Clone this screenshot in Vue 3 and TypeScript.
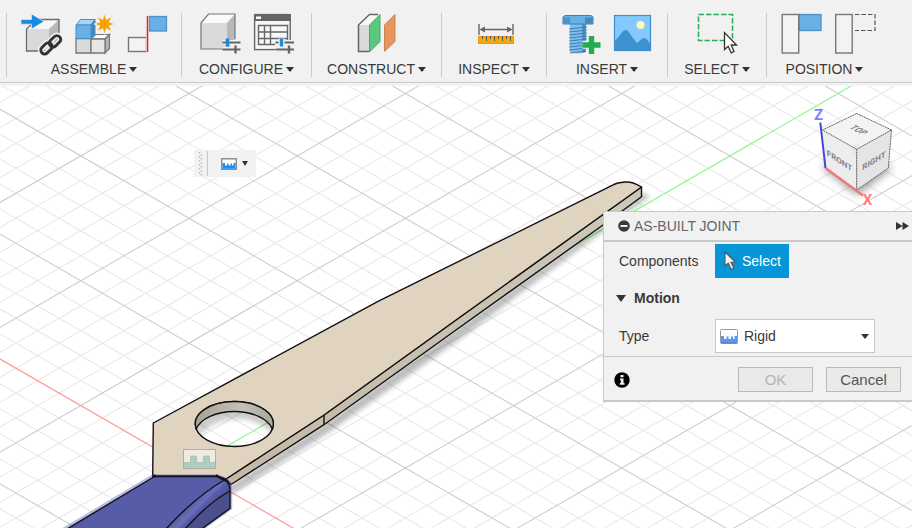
<script setup lang="ts">
import { ref } from 'vue'

interface Line { x1: number; y1: number; x2: number; y2: number; major: boolean }

// Ground grid: two families of lines crossing at the origin, every fifth one is major.
const origin = { x: 189, y: 468 }
const step = 24.97
const slope = 0.577
const span = 1400

function buildGrid(): Line[] {
  const lines: Line[] = []
  for (let i = -45; i <= 45; i++) {
    for (const dir of [1, -1]) {
      if (i === 0) continue
      const y = origin.y + i * step
      lines.push({
        x1: origin.x - span,
        y1: y - dir * slope * span,
        x2: origin.x + span,
        y2: y + dir * slope * span,
        major: i % 5 === 0,
      })
    }
  }
  return lines
}

const grid = buildGrid()
const minorLines = grid.filter((l) => !l.major)
const majorLines = grid.filter((l) => l.major)

function star(cx: number, cy: number, outer: number, inner: number): string {
  const pts: string[] = []
  for (let i = 0; i < 16; i++) {
    const r = i % 2 === 0 ? outer : inner
    const a = (Math.PI / 8) * i - Math.PI / 2
    pts.push(`${(cx + r * Math.cos(a)).toFixed(2)},${(cy + r * Math.sin(a)).toFixed(2)}`)
  }
  return pts.join(' ')
}

const sparkle = star(30.5, 11, 10.5, 5)
const jointType = ref('Rigid')
const motionOpen = ref(true)
</script>

<template>
  <div class="app">
    <header class="toolbar">
      <section class="group">
        <div class="tools">
          <button class="tool" aria-label="Insert component">
            <svg viewBox="0 0 42 42">
              <path d="M5.500 16 16 6.500H38L28 16Z" fill="#f7f7f7" />
              <path d="M28 16 38 6.500V29L28 38Z" fill="#b9b9b9" />
              <path d="M5.500 16H28V38H5.500Z" fill="#dadada" />
              <path d="M28 38H5.500V16L16 6.500H38V29L28 38" fill="none" stroke="#6b6b6b" stroke-width="1.300" />
              <path d="M0 6.500H10.500V1L23 8.500 10.500 16V11.200H0Z" fill="#1b8be0" stroke="#f1f1f1" stroke-width=".6" />
              <g fill="none" stroke="#f1f1f1" stroke-width="6">
                <rect x="19" y="31.500" width="13" height="7.600" rx="3.800" transform="rotate(-45 25.500 35.300)" />
                <rect x="27.500" y="24.500" width="13" height="7.600" rx="3.800" transform="rotate(-45 34 28.300)" />
              </g>
              <g fill="none" stroke="#333" stroke-width="2.900">
                <rect x="19" y="31.500" width="13" height="7.600" rx="3.800" transform="rotate(-45 25.500 35.300)" />
                <rect x="27.500" y="24.500" width="13" height="7.600" rx="3.800" transform="rotate(-45 34 28.300)" />
              </g>
            </svg>
          </button>
          <button class="tool" aria-label="New component">
            <svg viewBox="0 0 42 42">
              <path d="M2 25.500H17V40H2Z" fill="#dadada" stroke="#777" stroke-width="1.300" />
              <path d="M17 26 21.500 21.500H35.500L31 26Z" fill="#fafafa" stroke="#777" stroke-width="1.200" />
              <path d="M31 26 35.500 21.500V35.500L31 40Z" fill="#b5b5b5" stroke="#777" stroke-width="1.200" />
              <path d="M17 26H31V40H17Z" fill="#e6e6e6" stroke="#777" stroke-width="1.300" />
              <path d="M2 12 6.500 6.500H21L17 12Z" fill="#a9d5f5" stroke="#4690c8" />
              <path d="M17 12 21 6.500V21L17 25.500Z" fill="#3f86bd" stroke="#4690c8" />
              <path d="M2 12H17V25.500H2Z" fill="#69b0e6" stroke="#4690c8" />
              <polygon :points="sparkle" fill="#f8a000" stroke="#f1f1f1" stroke-width=".8" />
            </svg>
          </button>
          <button class="tool" aria-label="Joint">
            <svg viewBox="0 0 42 42">
              <rect x="1.500" y="24.500" width="18" height="14" fill="#f3f3f3" stroke="#777" stroke-width="1.400" />
              <rect x="22.500" y="3.500" width="17" height="14.500" fill="#69b0e6" stroke="#4c93c9" stroke-width="1.300" />
              <path d="M20.500 3V39" stroke="#f1f1f1" stroke-width="3" />
              <path d="M20.500 3V39" stroke="#d8232a" stroke-width="1.500" />
            </svg>
          </button>
        </div>
        <button class="menu">ASSEMBLE<i class="caret"></i></button>
      </section>

      <section class="group">
        <div class="tools">
          <button class="tool" aria-label="Configure model">
            <svg viewBox="0 0 42 42">
              <path d="M1 10 8.500 1H35L27 10Z" fill="#f9f9f9" />
              <path d="M1 10H27V36H1Z" fill="#dadada" />
              <path d="M27 10 35 1V27L27 36Z" fill="#b8b8b8" />
              <path d="M23 36H1V10L8.500 1H35V26" fill="none" stroke="#777" stroke-width="1.200" />
              <path d="M22.500 29.500H40.500M22.500 36.500H40.500" stroke="#f1f1f1" stroke-width="5" />
              <path d="M22.500 29.500H40.500M22.500 36.500H40.500" stroke="#666" stroke-width="2.200" />
              <path d="M27.500 25.500V33.500" stroke="#1b8be0" stroke-width="3.600" />
              <path d="M35.500 32.500V40.500" stroke="#666" stroke-width="2.400" />
            </svg>
          </button>
          <button class="tool" aria-label="Configuration table">
            <svg viewBox="0 0 42 42">
              <rect x="1.600" y="1.600" width="35.600" height="35" fill="#f7f7f7" stroke="#666" stroke-width="1.400" />
              <path d="M1 1H38V8H1Z" fill="#666" />
              <path d="M3 3.500H8V6H3Z" fill="#fff" />
              <path d="M5.500 12.500H34.500V31.500H5.500ZM5.500 19H34.500M5.500 25.500H34.500M11.500 12.500V31.500M17.500 12.500V31.500" fill="none" stroke="#666" stroke-width="1.400" />
              <path d="M22 27H41V41H22Z" fill="#f1f1f1" />
              <path d="M22.500 29.500H41M22.500 36.500H41" stroke="#666" stroke-width="2.200" />
              <path d="M28.500 25.500V33.500" stroke="#f1f1f1" stroke-width="6" />
              <path d="M28.500 25.500V33.500" stroke="#1b8be0" stroke-width="3.400" />
              <path d="M36 32.500V40.500" stroke="#666" stroke-width="2.400" />
            </svg>
          </button>
        </div>
        <button class="menu">CONFIGURE<i class="caret"></i></button>
      </section>

      <section class="group">
        <div class="tools">
          <button class="tool" aria-label="Offset plane">
            <svg viewBox="-1 0 42 42">
              <path d="M1.500 12 12.500 1.500H23L12 12Z" fill="#fafafa" />
              <path d="M1.500 12H12V38.500H1.500Z" fill="#dadada" />
              <path d="M12 38.500H1.500V12L12.500 1.500H21" fill="none" stroke="#666" stroke-width="1.500" />
              <path d="M12.500 12 23 1.500V28.500L12.500 39Z" fill="#5bc77c" stroke="#43ad65" />
              <path d="M27.500 12 38 1.500V28.500L27.500 38.500Z" fill="#e6955f" stroke="#cf8250" />
            </svg>
          </button>
        </div>
        <button class="menu">CONSTRUCT<i class="caret"></i></button>
      </section>

      <section class="group">
        <div class="tools">
          <button class="tool" aria-label="Measure">
            <svg viewBox="-3 0 42 42">
              <path d="M2 11V22M36 11V22M4 16.500H34" stroke="#666" stroke-width="1.400" />
              <path d="M2.500 16.500 8 13.500V19.500ZM35.500 16.500 30 13.500V19.500Z" fill="#666" />
              <rect x="1.500" y="23.500" width="35" height="7" fill="#fba905" stroke="#e89a10" />
              <path d="M5.500 23V26M9.500 23V28M13.500 23V26M17.500 23V28M21.500 23V26M25.500 23V28M29.500 23V26M33.500 23V28" stroke="#555" stroke-width="1" />
            </svg>
          </button>
        </div>
        <button class="menu">INSPECT<i class="caret"></i></button>
      </section>

      <section class="group">
        <div class="tools">
          <button class="tool" aria-label="Insert fastener">
            <svg viewBox="-2 0 42 42">
              <path d="M8 11H24V39Q16 42 8 39Z" fill="#7fbdea" />
              <path d="M20 11H24V39L20 40Z" fill="#4c93c9" />
              <path d="M7 16 25 14M7 19 25 17M7 22 25 20M7 25 25 23M7 28 25 26M7 31 25 29M7 34 25 32M7 37 25 35M8 40 24 38" stroke="#3c80b4" stroke-width="1" />
              <path d="M1 4 3 2.500H29L31 4V11H1Z" fill="#69b0e6" stroke="#3c80b4" />
              <path d="M1.500 4.500H8V10.500H1.500Z" fill="#4c93c9" />
              <path d="M23 4.500H30.500V10.500H23Z" fill="#4388c0" />
              <path d="M29.500 22.500V41M20.500 31.800H39" stroke="#f1f1f1" stroke-width="8" />
              <path d="M29.500 23V41M20.500 32H38.500" stroke="#22ac50" stroke-width="5.400" />
            </svg>
          </button>
          <button class="tool" aria-label="Insert canvas">
            <svg viewBox="0 0 42 42">
              <rect x="1.500" y="2.500" width="36" height="35" fill="#84c9fd" />
              <circle cx="27.500" cy="12" r="4" fill="#fdf8c4" stroke="#e8e2a0" stroke-width=".5" />
              <path d="M1.500 28C6 25 9 17 12.500 17S19 25 24 30C27 28 28.500 25 31 25S35 28 37.500 31V37.500H1.500Z" fill="#3d92cf" />
              <rect x="1.500" y="2.500" width="36" height="35" fill="none" stroke="#3e8fcb" stroke-width="1.200" />
            </svg>
          </button>
        </div>
        <button class="menu">INSERT<i class="caret"></i></button>
      </section>

      <section class="group">
        <div class="tools">
          <button class="tool" aria-label="Select">
            <svg viewBox="0 0 42 42">
              <rect x="1.500" y="1.500" width="34" height="26" fill="none" stroke="#25ae57" stroke-width="1.500" stroke-dasharray="5.500 2" />
              <path d="M27.500 19.500V36.500L31.200 33.200 34.200 39.800 37 38.500 34.200 32H39.500Z" fill="#fff" stroke="#333" stroke-width="1.300" />
            </svg>
          </button>
        </div>
        <button class="menu">SELECT<i class="caret"></i></button>
      </section>

      <section class="group">
        <div class="tools">
          <button class="tool" aria-label="Capture position">
            <svg viewBox="-3 0 42 42">
              <rect x="18" y="1.500" width="22" height="16" fill="#69b0e6" stroke="#4c93c9" stroke-width="1.300" />
              <rect x="1.200" y="1.500" width="16.500" height="38.500" fill="#f3f3f3" stroke="#777" stroke-width="1.400" />
            </svg>
          </button>
          <button class="tool" aria-label="Revert position">
            <svg viewBox="-3 0 42 42">
              <path d="M21 1.500H41V17.500H21" fill="none" stroke="#555" stroke-width="1.200" stroke-dasharray="4.500 2" />
              <rect x="1.700" y="1.500" width="16.500" height="38.500" fill="#f3f3f3" stroke="#777" stroke-width="1.400" />
            </svg>
          </button>
        </div>
        <button class="menu">POSITION<i class="caret"></i></button>
      </section>
    </header>

    <main class="viewport">
      <svg class="scene" viewBox="0 86 912 442" preserveAspectRatio="xMinYMin slice" role="img" aria-label="Model view">
        <defs>
          <linearGradient id="wall" x1="0" x2="1">
            <stop offset="0" stop-color="#aaa296" />
            <stop offset=".6" stop-color="#c2c1b6" />
            <stop offset="1" stop-color="#a8a89e" />
          </linearGradient>
          <linearGradient id="side" x1="0" x2="1">
            <stop offset="0" stop-color="#c6b8a5" />
            <stop offset="1" stop-color="#cbc8bb" />
          </linearGradient>
          <linearGradient id="fillet" gradientUnits="userSpaceOnUse" x1="192" y1="500" x2="206" y2="514">
            <stop offset="0" stop-color="#565ba8" />
            <stop offset=".45" stop-color="#6a6fba" />
            <stop offset=".6" stop-color="#565bad" />
            <stop offset="1" stop-color="#4e5399" />
          </linearGradient>
          <filter id="soft" x="-10%" y="-10%" width="120%" height="120%">
            <feGaussianBlur stdDeviation="2.500" />
          </filter>
          <clipPath id="holeClip"><ellipse cx="234.300" cy="434" rx="39" ry="22.500" /></clipPath>
        </defs>

        <g stroke="#e9e9e9" stroke-width="1.100">
          <line v-for="(l, i) in minorLines" :key="i" :x1="l.x1" :y1="l.y1" :x2="l.x2" :y2="l.y2" />
        </g>
        <g stroke="#cdcdcd" stroke-width="1.100">
          <line v-for="(l, i) in majorLines" :key="i" :x1="l.x1" :y1="l.y1" :x2="l.x2" :y2="l.y2" />
        </g>
        <line x1="-1211" y1="-339.800" x2="1589" y2="1275.800" stroke="#ff9595" stroke-width="1.200" />
        <line x1="189" y1="468" x2="1589" y2="-339.800" stroke="#8cf98c" stroke-width="1.200" />

        <path d="M229 486 324 424 456 329 603 224 642 193 650 196 606 229 460 339 328 433 232 494Z" fill="#000" opacity=".26" filter="url(#soft)" />
        <g clip-path="url(#holeClip)">
          <path d="M190 405H280V440Q258 417 234 419 214 420 198 437Z" fill="#000" opacity=".2" filter="url(#soft)" />
        </g>

        <g stroke="#111" stroke-width="1.400" stroke-linejoin="round">
          <path d="M226 479 324 415 456 320 603 214.500 641.500 187V196.700L603 225 456 330 324 424.700 231 484.500Z" fill="url(#side)" />
          <path d="M324 415V424.700" />
          <path
            d="M153.300 423 378 301.300 612.700 185.200Q617 182.500 625 182T641.500 187L603 214.500 456 320 324 415 226 479 217 476H152.700ZM195.300 424A39 22.500 0 0 0 273.300 424 39 22.500 0 0 0 195.300 424Z"
            fill="#e0d4c0"
            fill-rule="evenodd"
          />
          <path d="M196.300 429A39 22.500 0 1 1 272.300 429 39 22.500 0 0 0 196.300 429Z" fill="url(#wall)" />
        </g>

        <path d="M66 528 153 476H217Q231 480 230.500 489V508L203 528Z" fill="none" stroke="#4a52c4" stroke-width="3.500" opacity=".4" />
        <path d="M67 529 154.500 476.500H217Q230 480 230 489V508.500L201.500 529Z" fill="#575ca8" />
        <path d="M223.500 480.500C205 491 187 506 166 529H185C200 512 214 500 229.500 491Q230 485 223.500 480.500Z" fill="url(#fillet)" />
        <path d="M229.700 491C214 500 200 512 185 529H201.500L230 508.500Z" fill="#4b4f8c" />
        <g fill="none" stroke="#111" stroke-width="1.400" stroke-linejoin="round">
          <path d="M67 529 154.500 476.500H217Q230 480 230 489V508.500L201.500 529" />
          <path d="M226 479C205 491 187 506 166 529" />
          <path d="M229.700 491C214 500 200 512 185 529" />
        </g>
        <path d="M152.500 477.500 155.500 475M216 475 220 478 226 481" stroke="#111" stroke-width="1.800" fill="none" />

        <rect x="183.500" y="449.500" width="32" height="19" fill="#f2ede6" opacity=".85" />
        <path d="M184 462.500H190.500V456H196.500V462.500H203.500V456H209.500V462.500H215.500V468.500H184Z" fill="#abcfc3" stroke="#9cb5a9" stroke-width=".6" />
        <rect x="183.500" y="449.500" width="32" height="19" fill="none" stroke="#b7ac9b" />
      </svg>

      <svg class="cube" viewBox="812 104 90 104" role="img" aria-label="View cube">
        <defs>
          <filter id="cubeShadow" x="-30%" y="-30%" width="160%" height="160%"><feGaussianBlur stdDeviation="4" /></filter>
        </defs>
        <path d="M822 167 857 148 892 168 857 195Z" fill="#000" opacity=".4" filter="url(#cubeShadow)" />
        <path d="M856.700 113.500 891.500 130 856.700 149.300 822.500 130Z" fill="#f3f3f3" />
        <path d="M822.500 130 856.700 149.300V190L825.700 168.300Z" fill="#ededed" />
        <path d="M891.500 130 856.700 149.300V190L888.300 168Z" fill="#e5e5e5" />
        <path d="M852 147 857 143 862 147V152L857 156 852 152Z" fill="#dfe3ea" opacity=".7" />
        <path d="M856.700 113.500 891.500 130 856.700 149.300 822.500 130ZM856.700 149.300V190M891.500 130 888.300 168 856.700 190 825.700 168.300" fill="none" stroke="#666" stroke-dasharray="2 .6" />
        <path d="M820.300 122.500 825.500 168" stroke="#4444dc" stroke-width="2" />
        <path d="M825.500 168 863 195.500" stroke="#f07878" stroke-width="2.200" />
        <g class="face">
          <text transform="translate(855.500 131.500) rotate(26) skewX(-40)">TOP</text>
          <text transform="translate(839.500 163.500) skewY(33)">FRONT</text>
          <text transform="translate(874 163.500) skewY(-31)">RIGHT</text>
        </g>
        <text class="axis" x="818.500" y="120" fill="#8080fa">Z</text>
        <text class="axis" x="867.500" y="205" fill="#ff8080">X</text>
      </svg>

      <div class="mini">
        <svg class="grip" viewBox="0 0 12 27" aria-hidden="true">
          <path d="M1.500 2V26M3.500 4V26" stroke="#bbb" stroke-width="1.500" stroke-dasharray="1.500 2.500" />
          <path d="M9.500 1V26" stroke="#c6c6c6" />
        </svg>
        <button class="mini-button" aria-label="Joint menu">
          <svg width="16" height="12" viewBox="0 0 16 12">
            <rect x=".75" y=".75" width="14.500" height="10.500" fill="#fff" stroke="#8a8f94" stroke-width="1.500" />
            <path d="M1.500 5H4V7.500H6V5.500H7.500V7.500H9.500V5.500H11V7.500H12.500V5H14.500V10.800H1.500Z" fill="#1990f5" />
          </svg>
          <i class="caret small"></i>
        </button>
      </div>

      <form class="panel" @submit.prevent>
        <div class="panel-head">
          <button type="button" class="plain" aria-label="Collapse">
            <svg width="12" height="12" viewBox="0 0 12 12"><circle cx="6" cy="6" r="5.800" fill="#3a3a3a" /><path d="M2.500 6H9.500" stroke="#eee" stroke-width="2" /></svg>
          </button>
          <h2>AS-BUILT JOINT</h2>
          <button type="button" class="plain" aria-label="Expand">
            <svg width="13" height="8" viewBox="0 0 13 8"><path d="M0 0 6.500 4 0 8ZM6.500 0 13 4 6.500 8Z" fill="#333" /></svg>
          </button>
        </div>
        <div class="panel-body">
          <label for="pick">Components</label>
          <button id="pick" type="button" class="pick">
            <svg width="13" height="20" viewBox="0 0 13 20"><path d="M1 1V15L4.300 12.200 7.300 18.500 9.800 17.300 7 11.300H11.500Z" fill="#f4f4f4" stroke="#555" stroke-width="1.100" /></svg>
            Select
          </button>
          <button type="button" class="motion" :aria-expanded="motionOpen" @click="motionOpen = !motionOpen">
            <i class="caret large"></i>Motion
          </button>
          <label v-if="motionOpen" for="type">Type</label>
          <div v-if="motionOpen" class="dropdown">
            <select id="type" v-model="jointType">
              <option>Rigid</option>
              <option>Revolute</option>
              <option>Slider</option>
            </select>
            <svg class="type-icon" width="18" height="15" viewBox="0 0 18 15">
              <rect x=".5" y=".5" width="17" height="14" rx="1" fill="#fcfcfc" stroke="#999" />
              <path d="M1 7H4V10H6.500V7.500H8.500V10H11V7.500H13V10H14.500V7H17V13.500H1Z" fill="#5a96f5" />
              <path d="M1 13.800H17" stroke="#4775c0" stroke-width="1.200" />
            </svg>
            <i class="caret tiny"></i>
          </div>
        </div>
        <div class="panel-foot">
          <button type="button" class="plain info" aria-label="Information">
            <svg width="16" height="16" viewBox="0 0 16 16"><circle cx="8" cy="8" r="7.700" fill="#000" /><path d="M6.500 3H9.500V5.200H6.500ZM6 6.500H9.500V11H10.500V12.700H5.800V11H6.800V8H6Z" fill="#f1f1f1" /></svg>
          </button>
          <button type="submit" class="action" disabled>OK</button>
          <button type="button" class="action">Cancel</button>
        </div>
      </form>
    </main>
  </div>
</template>

<style>
body {
  margin: 0;
}
</style>

<style scoped>
.app {
  display: flex;
  flex-direction: column;
  min-height: 100vh;
  background: #fff;
  color: #3a3a3a;
  font: 14px/16px "Liberation Sans", Arial, sans-serif;
}
button,
select {
  font: inherit;
  color: inherit;
  margin: 0;
  padding: 0;
  border: 0;
  border-radius: 0;
  background: none;
}
svg {
  display: block;
}
.toolbar {
  display: grid;
  grid-template-columns: 175fr 130fr 130fr 105fr 121fr 99fr 116fr;
  padding: 13px 30px 5px 6px;
  background: #f1f1f1;
  border-bottom: 1px solid #c9c9c9;
}
.group {
  display: flex;
  flex-direction: column;
  align-items: center;
  gap: 6px;
  border-left: 1px solid #cbcbcb;
}
.tools {
  display: flex;
  gap: 11px;
  padding-left: 1px;
}
.tool svg {
  width: 42px;
  height: 42px;
  overflow: visible;
}
.menu {
  display: flex;
  align-items: center;
  gap: 3px;
  white-space: nowrap;
}
.caret {
  border: 4px solid transparent;
  border-top: 5px solid #333;
  border-bottom: 0;
}
.small {
  border-width: 5px 3px 0;
}
.tiny {
  border-width: 5px 4px 0;
}
.large {
  border-width: 7px 5px 0;
}
.viewport {
  position: relative;
  flex: 1;
  overflow: hidden;
  border-top: 3px solid #f3f3f3;
}
.scene {
  position: absolute;
  width: 100%;
  height: 100%;
}
.cube {
  position: absolute;
  top: 18px;
  right: 10px;
  width: 90px;
  height: 104px;
}
.face {
  fill: #7f8489;
  font: bold 8px Roboto, "Liberation Sans", sans-serif;
  text-anchor: middle;
}
.axis {
  font: bold 15px Roboto, "Liberation Sans", sans-serif;
  text-anchor: middle;
}
.mini {
  position: absolute;
  top: 64px;
  left: 194px;
  display: flex;
  align-items: center;
  height: 27px;
  padding: 0 8px 0 4px;
  gap: 11px;
  background: rgba(241, 241, 241, 0.95);
}
.grip {
  width: 12px;
  height: 27px;
}
.mini-button {
  display: flex;
  align-items: center;
  gap: 5px;
}
.panel {
  position: absolute;
  top: 125px;
  right: 0;
  width: 308px;
  background: #f1f1f1;
  border: solid #c9c9c9;
  border-width: 1px 0 2px 1px;
}
.panel-head {
  display: flex;
  align-items: center;
  gap: 4px;
  height: 28px;
  padding: 0 3px 0 14px;
  border-bottom: 2px solid #c9c9c9;
}
h2 {
  flex: 1;
  margin: 0;
  font: inherit;
  color: #666;
}
.panel-body {
  display: grid;
  grid-template-columns: 96px 160px;
  align-items: center;
  justify-items: start;
  padding: 2px 0 3px 15px;
}
.pick {
  display: flex;
  align-items: center;
  gap: 5px;
  height: 34px;
  padding: 0 8px 0 9px;
  background: #0696d7;
  color: #fff;
}
.motion {
  grid-column: 1 / -1;
  display: flex;
  align-items: center;
  gap: 8px;
  height: 41px;
  margin-left: -3px;
  padding-bottom: 1px;
  font-weight: bold;
}
.dropdown {
  display: grid;
  grid-template-columns: 30px 1fr 14px;
  align-items: center;
  width: 100%;
  height: 34px;
}
.dropdown > * {
  grid-row: 1;
}
.dropdown select {
  grid-column: 1 / -1;
  width: 100%;
  height: 34px;
  padding-left: 28px;
  appearance: none;
  background: #fff;
  border: 1px solid #c9c9c9;
}
.type-icon {
  grid-column: 1;
  margin-left: 5px;
  pointer-events: none;
}
.dropdown .caret {
  grid-column: 3;
  justify-self: start;
  pointer-events: none;
}
.panel-foot {
  display: flex;
  align-items: center;
  gap: 13px;
  padding: 10px 11px 8px 10px;
  border-top: 1px solid #c9c9c9;
}
.info {
  margin-right: auto;
}
.action {
  width: 75px;
  height: 25px;
  border: 1px solid #b9b9b9;
  background: #e9e9e9;
  color: #555;
  font-size: 15px;
}
.action:disabled {
  color: #b5b5b5;
}
</style>
